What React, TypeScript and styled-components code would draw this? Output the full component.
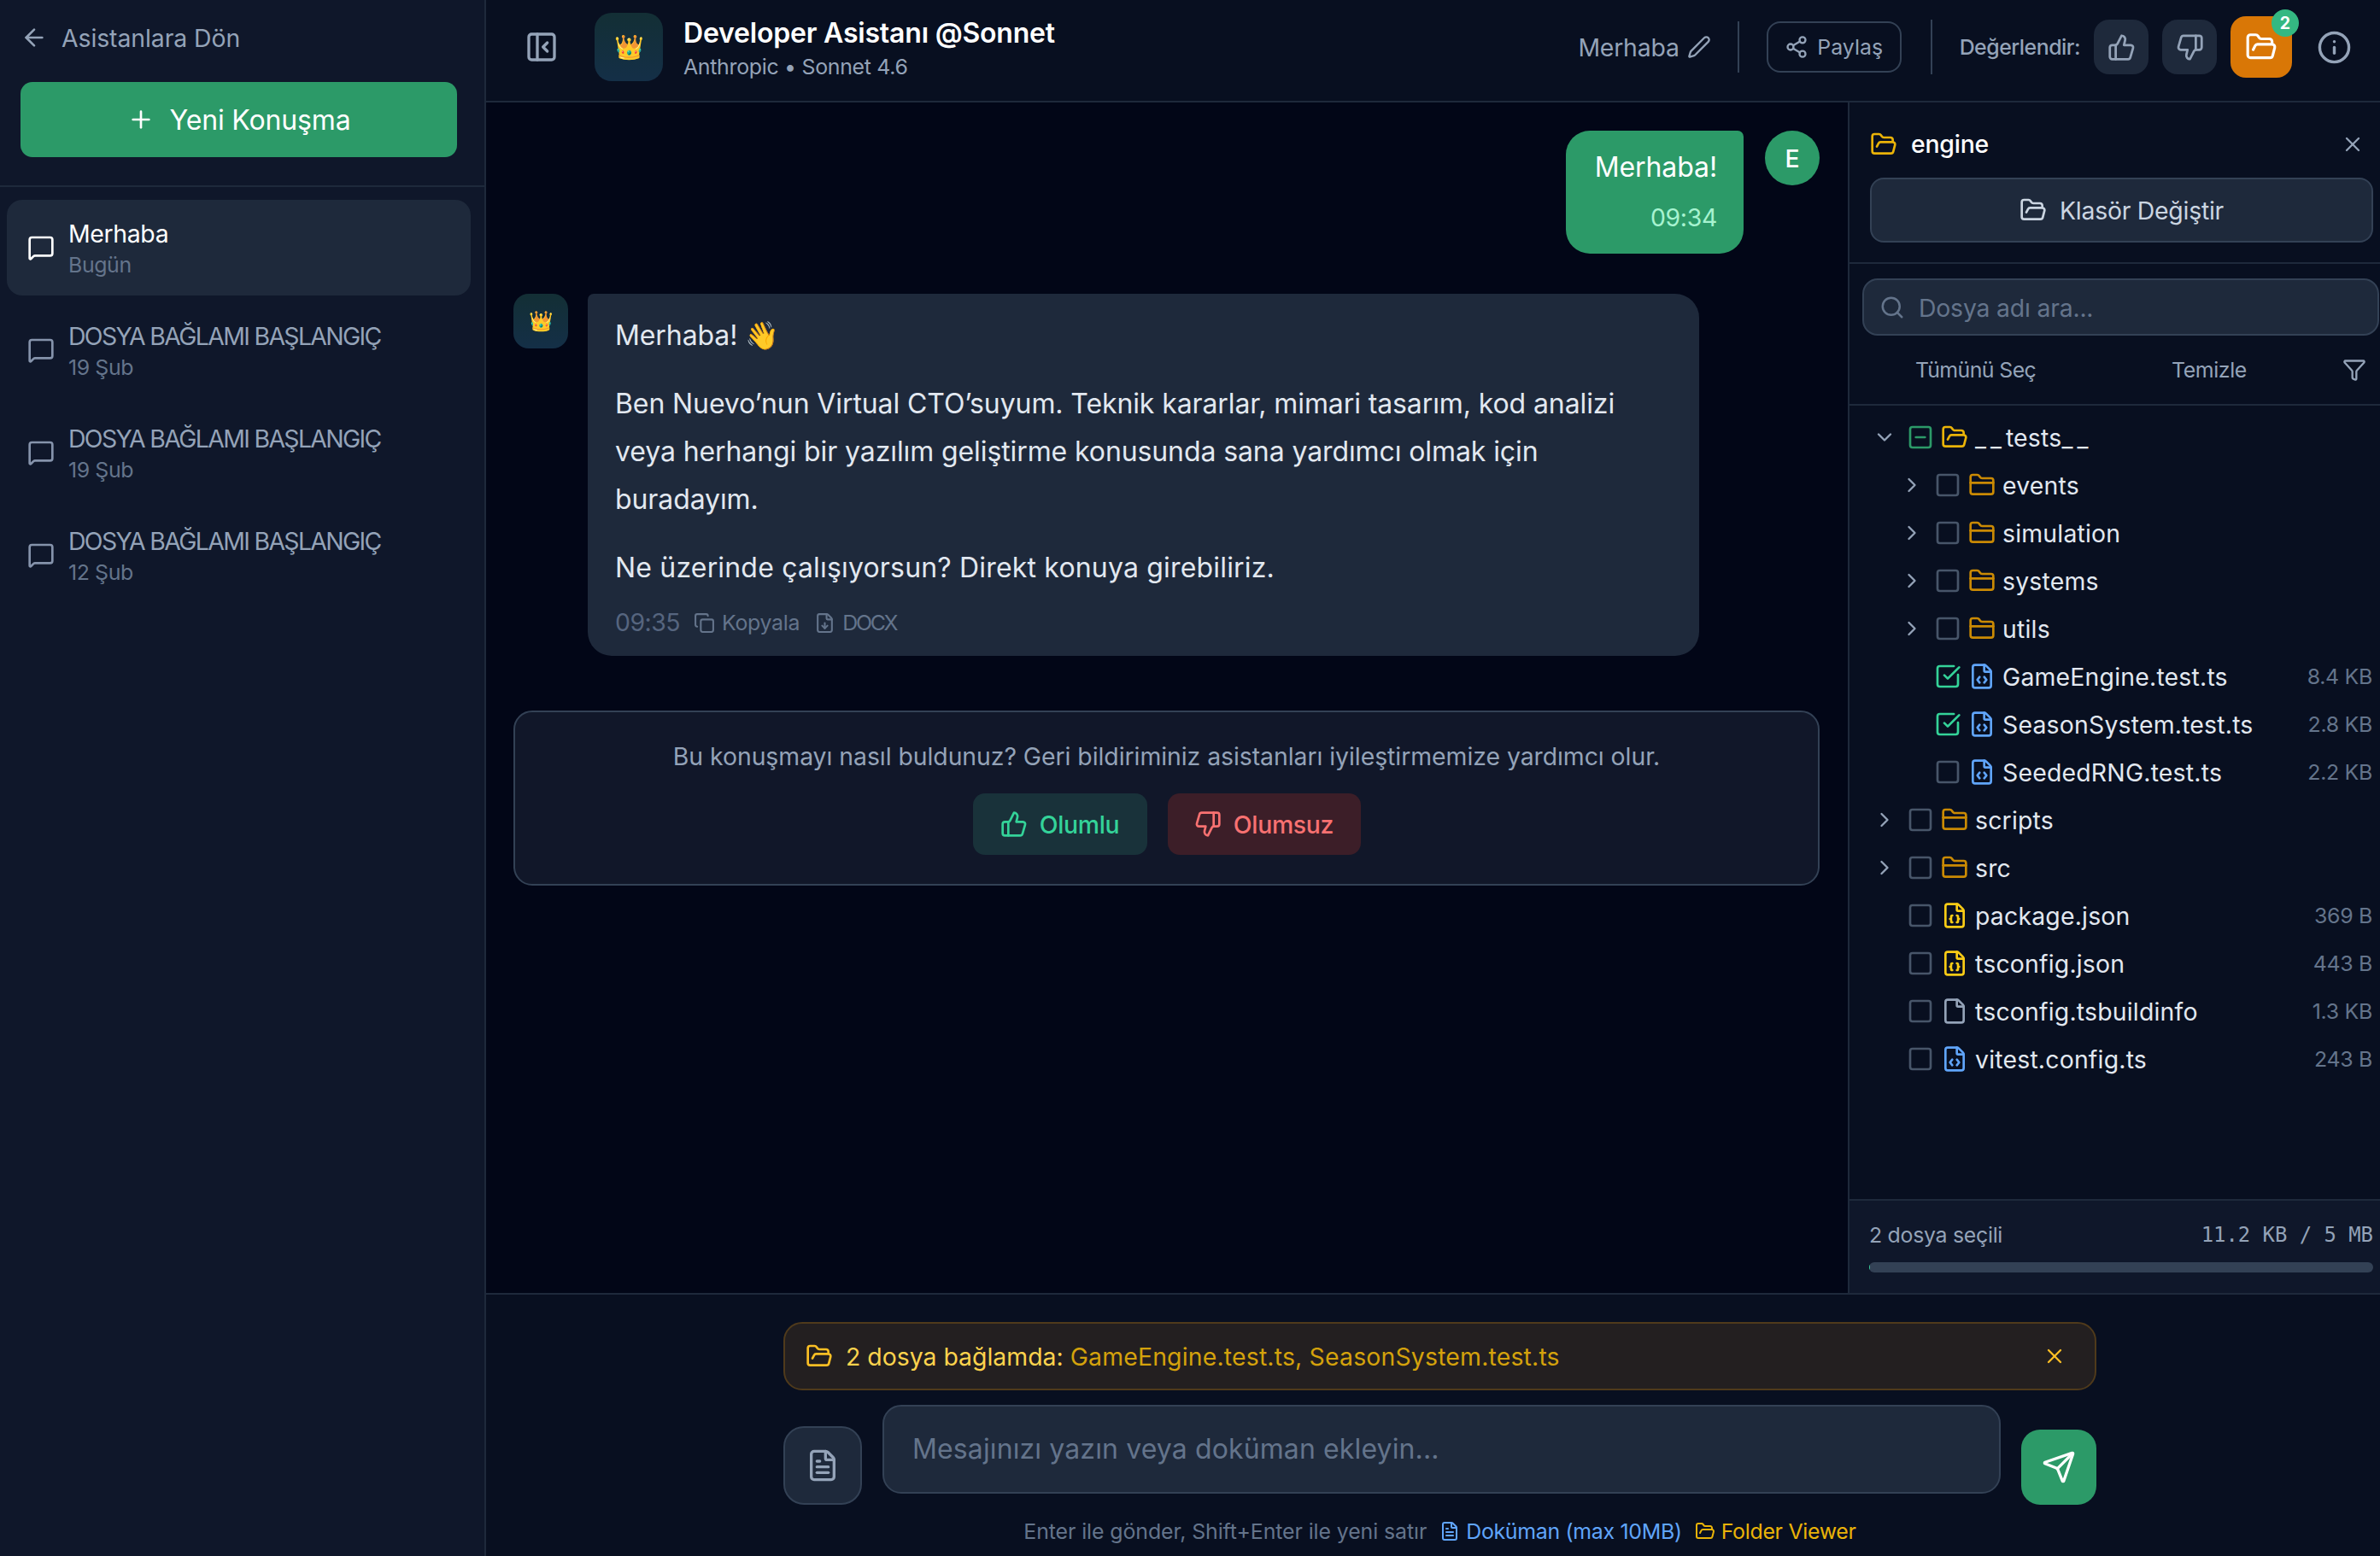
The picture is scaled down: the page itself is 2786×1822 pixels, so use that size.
import * as React from 'react'
import styled, {createGlobalStyle} from 'styled-components'
import {
    ArrowLeft, Plus, MessageSquare, PanelLeftClose, Pen, Share2, ThumbsUp, ThumbsDown, FolderOpen, FolderClosed, Info, X,
    Search, Funnel, ChevronDown, ChevronRight, Square, SquareCheckBig, SquareMinus, FileCode, FileJson, File, FileText,
    Copy, FileDown, Send,
} from 'lucide-react'

const Global = createGlobalStyle`
    html,body{
        margin:0;
        padding:0;
        background:#020617;
    }
    *{
        box-sizing:border-box;
    }
    body{
        font-family:Inter,"Noto Sans",sans-serif;
        color:#e2e8f0;
    }
`

const Root = styled.div`
    width:2786px;
    height:1822px;
    display:flex;
    overflow:hidden;
`

/* left column */
const Sidebar = styled.aside`
    width:569px;
    flex-shrink:0;
    background:#0f172a;
    border-right:2px solid #1e293b;
    display:flex;
    flex-direction:column;
`
const SideTop = styled.div`
    height:219px;
    padding:0 32px 0 24px;
    border-bottom:2px solid #1e293b;
`
const BackLink = styled.div`
    height:96px;
    display:flex;
    align-items:center;
    gap:16px;
    padding-bottom:8px;
    font-size:28.4px;
    letter-spacing:-0.08px;
    color:#94a3b8;
`
const NewChat = styled.div`
    height:88px;
    width:511px;
    background:#2c9a68;
    border-radius:14px;
    display:flex;
    align-items:center;
    justify-content:center;
    gap:18px;
    font-size:32px;
    letter-spacing:-0.15px;
    color:#fff;
`
const ConvList = styled.div`
    padding:15px 16px 0 8px;
    display:flex;
    flex-direction:column;
    gap:8px;
`
const ConvItem = styled.div<{$active?:boolean}>`
    height:112px;
    border-radius:18px;
    padding-left:24px;
    display:flex;
    align-items:center;
    gap:16px;
    background:${p=>p.$active?'#1e293b':'transparent'};
    color:${p=>p.$active?'#fff':'#8593ab'};
`
const ConvText = styled.div`
    display:flex;
    flex-direction:column;
    gap:3px;
`
const ConvTitle = styled.div<{$active?:boolean}>`
    font-size:28.4px;
    line-height:36px;
    letter-spacing:${p=>p.$active?'-0.34px':'-1.64px'};
    color:${p=>p.$active?'#fff':'#94a3b8'};
`
const ConvDate = styled.div`
    font-size:24.9px;
    line-height:30px;
    letter-spacing:-0.4px;
    color:#64748b;
`

/* main column */
const Main = styled.main`
    flex:1;
    min-width:0;
    display:flex;
    flex-direction:column;
`
const Header = styled.header`
    height:120px;
    flex-shrink:0;
    background:#080f20;
    border-bottom:2px solid #1e293b;
    display:flex;
    align-items:center;
    padding:0 33px 8px 45px;
`
const PanelToggle = styled.div`
    width:40px;
    height:40px;
    margin-right:42px;
    color:#94a3b8;
    display:flex;
`
const BotLogo = styled.div<{$small?:boolean}>`
    width:${p=>p.$small?64:80}px;
    height:${p=>p.$small?64:80}px;
    flex-shrink:0;
    border-radius:${p=>p.$small?18:20}px;
    background:linear-gradient(180deg,#132f35,#142f47);
    display:flex;
    align-items:center;
    justify-content:center;
    font-size:${p=>p.$small?23:28}px;
    line-height:1;
`
const TitleBlock = styled.div`
    margin-left:24px;
    padding-top:2px;
    display:flex;
    flex-direction:column;
    gap:4px;
    flex:1;
`
const Title = styled.div`
    font-size:32px;
    line-height:40px;
    font-weight:600;
    color:#fff;
    letter-spacing:-0.2px;
`
const Subtitle = styled.div`
    font-size:24.9px;
    line-height:30px;
    color:#94a3b8;
    letter-spacing:-0.3px;
`
const ChatName = styled.div`
    display:flex;
    align-items:center;
    gap:9px;
    font-size:28.4px;
    color:#94a3b8;
    letter-spacing:-0.2px;
`
const VBar = styled.div<{$tall?:boolean}>`
    width:2px;
    height:${p=>p.$tall?64:60}px;
    background:#334155;
    margin:${p=>p.$tall?'0 32px 0 34px':'0 32px 0 31px'};
`
const ShareBtn = styled.div`
    width:158px;
    height:60px;
    border:2px solid #334155;
    border-radius:16px;
    display:flex;
    align-items:center;
    justify-content:center;
    gap:10px;
    font-size:24.9px;
    color:#94a3b8;
`
const RateLabel = styled.div`
    font-size:24.9px;
    font-weight:500;
    color:#94a3b8;
    margin-right:16px;
    letter-spacing:-0.5px;
`
const IconBtn = styled.div`
    width:64px;
    height:64px;
    border-radius:18px;
    background:#1e293b;
    color:#94a3b8;
    display:flex;
    align-items:center;
    justify-content:center;
    margin-right:16px;
`
const FolderBtn = styled.div`
    width:72px;
    height:72px;
    border-radius:18px;
    background:#d97706;
    color:#fff;
    display:flex;
    align-items:center;
    justify-content:center;
    position:relative;
`
const Badge = styled.span`
    position:absolute;
    top:-8px;
    right:-8px;
    width:32px;
    height:32px;
    border-radius:50%;
    background:#34b882;
    color:#fff;
    font-size:19.5px;
    font-weight:700;
    display:flex;
    align-items:center;
    justify-content:center;
`
const InfoBtn = styled.div`
    margin-left:29px;
    color:#94a3b8;
    display:flex;
`

const Body = styled.div`
    flex:1;
    min-height:0;
    display:flex;
`
const Chat = styled.section`
    flex:1;
    min-width:0;
    background:#020617;
    padding:33px 33px 0 32px;
    display:flex;
    flex-direction:column;
`
const UserRow = styled.div`
    display:flex;
    justify-content:flex-end;
    gap:25px;
`
const UserBubble = styled.div`
    width:208px;
    height:144px;
    background:#2c9a68;
    border-radius:28px 7px 28px 28px;
    padding:21px 31px 0 32px;
    text-align:right;
`
const BubbleText = styled.div`
    font-size:32px;
    line-height:44px;
    color:#fff;
    letter-spacing:-0.1px;
`
const UserTime = styled.div`
    font-size:28.4px;
    line-height:36px;
    margin-top:19px;
    color:#a7f3d0;
    letter-spacing:-0.3px;
`
const UserAvatar = styled.div`
    width:64px;
    height:64px;
    border-radius:50%;
    background:#2c9a68;
    color:#fff;
    font-size:28.4px;
    font-weight:500;
    display:flex;
    align-items:center;
    justify-content:center;
`
const BotRow = styled.div`
    display:flex;
    gap:23px;
    margin-top:47px;
`
const BotBubble = styled.div`
    width:1301px;
    height:424px;
    background:#1e293b;
    border-radius:7px 28px 28px 28px;
    padding:21px 60px 0 32px;
    font-size:32px;
    line-height:56px;
    color:#e2e8f0;
`
const Para = styled.p<{$loose?:boolean}>`
    margin:0 0 24px;
    letter-spacing:${p=>p.$loose?'0.18px':'-0.1px'};
`
const Meta = styled.div`
    display:flex;
    align-items:center;
    margin-top:-6px;
    color:#64748b;
    font-size:24.9px;
    line-height:36px;
    letter-spacing:-0.3px;
`
const MetaTime = styled.span`
    font-size:28.4px;
    color:#56657f;
    margin-right:16px;
    letter-spacing:-0.5px;
`
const MetaAction = styled.span<{$caps?:boolean}>`
    display:inline-flex;
    align-items:center;
    gap:8px;
    margin-right:17px;
    letter-spacing:${p=>p.$caps?'-2.2px':'-0.3px'};
`
const Feedback = styled.div`
    width:1529px;
    height:205px;
    margin-top:64px;
    background:#111729;
    border:2px solid #334155;
    border-radius:22px;
    display:flex;
    flex-direction:column;
    align-items:center;
    padding-top:28px;
`
const FeedbackText = styled.div`
    font-size:28.4px;
    line-height:48px;
    color:#94a3b8;
    letter-spacing:-0.05px;
`
const FeedbackBtns = styled.div`
    display:flex;
    gap:24px;
    margin-top:19px;
`
const FeedbackBtn = styled.div<{$bad?:boolean}>`
    width:${p=>p.$bad?226:204}px;
    height:72px;
    border-radius:14px;
    display:flex;
    align-items:center;
    justify-content:center;
    gap:14px;
    font-size:28.4px;
    font-weight:500;
    letter-spacing:-0.3px;
    background:${p=>p.$bad?'#3c1e28':'#19323a'};
    color:${p=>p.$bad?'#f87171':'#34d399'};
`

/* file panel */
const Panel = styled.aside`
    width:623px;
    flex-shrink:0;
    background:#080f20;
    border-left:2px solid #1e293b;
    display:flex;
    flex-direction:column;
`
const PanelHead = styled.div`
    height:189px;
    padding:0 8px 0 24px;
    border-bottom:2px solid #1e293b;
`
const PanelTitleRow = styled.div`
    height:88px;
    padding:9px 10px 0 0;
    display:flex;
    align-items:center;
    gap:16px;
    font-size:28.4px;
    font-weight:500;
    color:#fff;
`
const PanelTitleText = styled.div`
    flex:1;
    letter-spacing:-0.2px;
`
const ChangeFolder = styled.div`
    height:76px;
    background:#1e293b;
    border:2px solid #334155;
    border-radius:16px;
    display:flex;
    align-items:center;
    justify-content:center;
    gap:15px;
    font-size:28.4px;
    color:#cbd5e1;
    letter-spacing:-0.25px;
`
const SearchBox = styled.div`
    height:67px;
    margin:17px 1px 0 15px;
    background:#1e293b;
    border:2px solid #334155;
    border-radius:18px;
    display:flex;
    align-items:center;
    gap:16px;
    padding-left:18px;
    font-size:28.4px;
    line-height:32px;
    color:#64748b;
    letter-spacing:-0.2px;
`
const SearchText = styled.span`
    padding-top:2px;
`
const ActionRow = styled.div`
    height:82px;
    padding:0 16px 0 77px;
    border-bottom:2px solid #1e293b;
    display:flex;
    align-items:center;
    font-size:24.9px;
    color:#94a3b8;
`
const ActionText = styled.span<{$wide?:boolean}>`
    width:${p=>p.$wide?300:200}px;
    letter-spacing:${p=>p.$wide?'-0.6px':'-0.4px'};
`
const FunnelWrap = styled.span`
    margin-left:auto;
    display:flex;
`
const Tree = styled.div`
    flex:1;
    padding-top:9px;
`
const TreeRow = styled.div<{$level:number}>`
    height:56px;
    display:flex;
    align-items:center;
    padding:0 9px 0 ${p=>27+p.$level*32}px;
`
const Caret = styled.span`
    width:28px;
    height:28px;
    margin-right:12px;
    flex-shrink:0;
    color:#94a3b8;
    display:flex;
`
const Check = styled.span<{$state:'on'|'off'|'mixed'}>`
    display:flex;
    margin-right:8px;
    color:${p=>p.$state==='on'?'#34d399':p.$state==='mixed'?'#2c9a68':'#475569'};
`
const TypeIcon = styled.span<{$color:string}>`
    display:flex;
    margin-right:8px;
    color:${p=>p.$color};
`
const FileName = styled.span`
    flex:1;
    font-size:28.4px;
    color:#e2e8f0;
    letter-spacing:0.2px;
`
const Underscore = styled.span`
    letter-spacing:5px;
`
const FileSize = styled.span`
    font-size:24.9px;
    color:#64748b;
    letter-spacing:-0.3px;
`
const PanelFoot = styled.div`
    height:110px;
    flex-shrink:0;
    background:#0f172a;
    border-top:2px solid #1e293b;
    padding:25px 8px 0 23px;
`
const FootRow = styled.div`
    display:flex;
    justify-content:space-between;
    align-items:center;
    font-size:24.9px;
    line-height:30px;
    color:#94a3b8;
    letter-spacing:-0.3px;
`
const Mono = styled.span`
    font-family:"DejaVu Sans Mono","Liberation Mono",monospace;
    font-size:23.9px;
    letter-spacing:0;
`
const Track = styled.div`
    height:12px;
    margin-top:17px;
    background:#334155;
    border-radius:6px;
    overflow:hidden;
`
const Fill = styled.div`
    height:100%;
    background:#34d399;
`

/* composer */
const Composer = styled.footer`
    height:308px;
    flex-shrink:0;
    background:#080f20;
    border-top:2px solid #1e293b;
    display:flex;
    flex-direction:column;
    align-items:center;
    padding:32px 0 0 16px;
`
const ContextBar = styled.div`
    width:1537px;
    height:80px;
    flex-shrink:0;
    background:#231f20;
    border:2px solid #4f3a1b;
    border-radius:22px;
    display:flex;
    align-items:center;
    padding:0 33px 0 24px;
    font-size:28.4px;
    color:#fbbf24;
`
const ContextLabel = styled.span`
    margin-left:15px;
    color:#fcd34d;
    letter-spacing:0;
`
const ContextFiles = styled.span`
    margin-left:8px;
    flex:1;
    color:#d4a20c;
    letter-spacing:0.18px;
`
const ComposeRow = styled.div`
    width:1537px;
    margin-top:17px;
    display:flex;
    align-items:flex-end;
    gap:24px;
`
const AttachBtn = styled.div`
    width:92px;
    height:92px;
    flex-shrink:0;
    background:#1e293b;
    border:2px solid #334155;
    border-radius:24px;
    color:#94a3b8;
    display:flex;
    align-items:center;
    justify-content:center;
`
const InputBox = styled.div`
    flex:1;
    height:104px;
    margin-bottom:13px;
    padding:0 0 2px 33px;
    background:#1e293b;
    border:2px solid #334155;
    border-radius:22px;
    display:flex;
    align-items:center;
    font-size:32px;
    color:#64748b;
    letter-spacing:0.12px;
`
const SendBtn = styled.div`
    width:88px;
    height:88px;
    flex-shrink:0;
    background:#2c9a68;
    border-radius:22px;
    color:#fff;
    display:flex;
    align-items:center;
    justify-content:center;
`
const Hint = styled.div`
    margin-top:16px;
    display:flex;
    align-items:center;
    gap:15px;
    font-size:24.9px;
    letter-spacing:-0.1px;
    color:#64748b;
`
const HintItem = styled.span<{$color:string}>`
    display:inline-flex;
    align-items:center;
    gap:7px;
    letter-spacing:-0.3px;
    color:${p=>p.$color};
`

type TreeItem = {
    name:string
    level:number
    kind:'open'|'folder'|'ts'|'json'|'file'
    caret?:'down'|'right'
    state?:'on'|'off'|'mixed'
    size?:string
}

const conversations = [
    {title:'Merhaba',date:'Bugün',active:true},
    {title:'DOSYA BAĞLAMI BAŞLANGIÇ',date:'19 Şub'},
    {title:'DOSYA BAĞLAMI BAŞLANGIÇ',date:'19 Şub'},
    {title:'DOSYA BAĞLAMI BAŞLANGIÇ',date:'12 Şub'},
]

const files:TreeItem[] = [
    {name:'__tests__',level:0,kind:'open',caret:'down',state:'mixed'},
    {name:'events',level:1,kind:'folder',caret:'right'},
    {name:'simulation',level:1,kind:'folder',caret:'right'},
    {name:'systems',level:1,kind:'folder',caret:'right'},
    {name:'utils',level:1,kind:'folder',caret:'right'},
    {name:'GameEngine.test.ts',level:1,kind:'ts',state:'on',size:'8.4 KB'},
    {name:'SeasonSystem.test.ts',level:1,kind:'ts',state:'on',size:'2.8 KB'},
    {name:'SeededRNG.test.ts',level:1,kind:'ts',size:'2.2 KB'},
    {name:'scripts',level:0,kind:'folder',caret:'right'},
    {name:'src',level:0,kind:'folder',caret:'right'},
    {name:'package.json',level:0,kind:'json',size:'369 B'},
    {name:'tsconfig.json',level:0,kind:'json',size:'443 B'},
    {name:'tsconfig.tsbuildinfo',level:0,kind:'file',size:'1.3 KB'},
    {name:'vitest.config.ts',level:0,kind:'ts',size:'243 B'},
]

const kindIcon = (kind:TreeItem['kind']) => {
    switch(kind){
        case 'open': return <TypeIcon $color="#eab308"><FolderOpen size={32}/></TypeIcon>
        case 'folder': return <TypeIcon $color="#ca8a04"><FolderClosed size={32}/></TypeIcon>
        case 'ts': return <TypeIcon $color="#60a5fa"><FileCode size={32}/></TypeIcon>
        case 'json': return <TypeIcon $color="#facc15"><FileJson size={32}/></TypeIcon>
        default: return <TypeIcon $color="#94a3b8"><File size={32}/></TypeIcon>
    }
}

const checkIcon = (state:TreeItem['state']) => {
    if(state==='on') return <Check $state="on"><SquareCheckBig size={32}/></Check>
    if(state==='mixed') return <Check $state="mixed"><SquareMinus size={32}/></Check>
    return <Check $state="off"><Square size={32}/></Check>
}

const fileLabel = (name:string) => name.split(/(__)/).map((part,i)=>(
    part==='__'?<Underscore key={i}>{part}</Underscore>:part
))

export default function App(){
    return(
        <Root>
            <Global/>
            <Sidebar>
                <SideTop>
                    <BackLink><ArrowLeft size={32}/>Asistanlara Dön</BackLink>
                    <NewChat><Plus size={32}/>Yeni Konuşma</NewChat>
                </SideTop>
                <ConvList>
                    {conversations.map((c,i)=>(
                        <ConvItem key={i} $active={c.active}>
                            <MessageSquare size={32}/>
                            <ConvText>
                                <ConvTitle $active={c.active}>{c.title}</ConvTitle>
                                <ConvDate>{c.date}</ConvDate>
                            </ConvText>
                        </ConvItem>
                    ))}
                </ConvList>
            </Sidebar>
            <Main>
                <Header>
                    <PanelToggle><PanelLeftClose size={40}/></PanelToggle>
                    <BotLogo>👑</BotLogo>
                    <TitleBlock>
                        <Title>Developer Asistanı @Sonnet</Title>
                        <Subtitle>Anthropic • Sonnet 4.6</Subtitle>
                    </TitleBlock>
                    <ChatName>Merhaba<Pen size={28}/></ChatName>
                    <VBar/>
                    <ShareBtn><Share2 size={28}/>Paylaş</ShareBtn>
                    <VBar $tall/>
                    <RateLabel>Değerlendir:</RateLabel>
                    <IconBtn><ThumbsUp size={33}/></IconBtn>
                    <IconBtn><ThumbsDown size={33}/></IconBtn>
                    <FolderBtn><FolderOpen size={38}/><Badge>2</Badge></FolderBtn>
                    <InfoBtn><Info size={41}/></InfoBtn>
                </Header>
                <Body>
                    <Chat>
                        <UserRow>
                            <UserBubble>
                                <BubbleText>Merhaba!</BubbleText>
                                <UserTime>09:34</UserTime>
                            </UserBubble>
                            <UserAvatar>E</UserAvatar>
                        </UserRow>
                        <BotRow>
                            <BotLogo $small>👑</BotLogo>
                            <BotBubble>
                                <Para>Merhaba! 👋</Para>
                                <Para>Ben Nuevo’nun Virtual CTO’suyum. Teknik kararlar, mimari tasarım, kod analizi veya herhangi bir yazılım geliştirme konusunda sana yardımcı olmak için buradayım.</Para>
                                <Para $loose>Ne üzerinde çalışıyorsun? Direkt konuya girebiliriz.</Para>
                                <Meta>
                                    <MetaTime>09:35</MetaTime>
                                    <MetaAction><Copy size={25}/>Kopyala</MetaAction>
                                    <MetaAction $caps><FileDown size={25}/>DOCX</MetaAction>
                                </Meta>
                            </BotBubble>
                        </BotRow>
                        <Feedback>
                            <FeedbackText>Bu konuşmayı nasıl buldunuz? Geri bildiriminiz asistanları iyileştirmemize yardımcı olur.</FeedbackText>
                            <FeedbackBtns>
                                <FeedbackBtn><ThumbsUp size={32}/>Olumlu</FeedbackBtn>
                                <FeedbackBtn $bad><ThumbsDown size={32}/>Olumsuz</FeedbackBtn>
                            </FeedbackBtns>
                        </Feedback>
                    </Chat>
                    <Panel>
                        <PanelHead>
                            <PanelTitleRow>
                                <FolderOpen size={32} color="#eab308"/>
                                <PanelTitleText>engine</PanelTitleText>
                                <X size={28} color="#94a3b8"/>
                            </PanelTitleRow>
                            <ChangeFolder><FolderOpen size={32}/>Klasör Değiştir</ChangeFolder>
                        </PanelHead>
                        <SearchBox><Search size={30}/><SearchText>Dosya adı ara...</SearchText></SearchBox>
                        <ActionRow>
                            <ActionText $wide>Tümünü Seç</ActionText>
                            <ActionText>Temizle</ActionText>
                            <FunnelWrap><Funnel size={28}/></FunnelWrap>
                        </ActionRow>
                        <Tree>
                            {files.map(f=>(
                                <TreeRow key={f.name} $level={f.level}>
                                    <Caret>
                                        {f.caret==='down'&&<ChevronDown size={28}/>}
                                        {f.caret==='right'&&<ChevronRight size={28}/>}
                                    </Caret>
                                    {checkIcon(f.state)}
                                    {kindIcon(f.kind)}
                                    <FileName>{fileLabel(f.name)}</FileName>
                                    {f.size&&<FileSize>{f.size}</FileSize>}
                                </TreeRow>
                            ))}
                        </Tree>
                        <PanelFoot>
                            <FootRow>
                                <span>2 dosya seçili</span>
                                <Mono>11.2 KB / 5 MB</Mono>
                            </FootRow>
                            <Track><Fill style={{width:`${(11.2/(5*1024))*100}%`}}/></Track>
                        </PanelFoot>
                    </Panel>
                </Body>
                <Composer>
                    <ContextBar>
                        <FolderOpen size={32} color="#fbbf24"/>
                        <ContextLabel>2 dosya bağlamda:</ContextLabel>
                        <ContextFiles>GameEngine.test.ts, SeasonSystem.test.ts</ContextFiles>
                        <X size={28} color="#fbbf24"/>
                    </ContextBar>
                    <ComposeRow>
                        <AttachBtn><FileText size={40}/></AttachBtn>
                        <InputBox>Mesajınızı yazın veya doküman ekleyin...</InputBox>
                        <SendBtn><Send size={40}/></SendBtn>
                    </ComposeRow>
                    <Hint>
                        <span>Enter ile gönder, Shift+Enter ile yeni satır</span>
                        <HintItem $color="#60a5fa"><FileText size={24}/>Doküman (max 10MB)</HintItem>
                        <HintItem $color="#eab308"><FolderOpen size={24}/>Folder Viewer</HintItem>
                    </Hint>
                </Composer>
            </Main>
        </Root>
    )
}
